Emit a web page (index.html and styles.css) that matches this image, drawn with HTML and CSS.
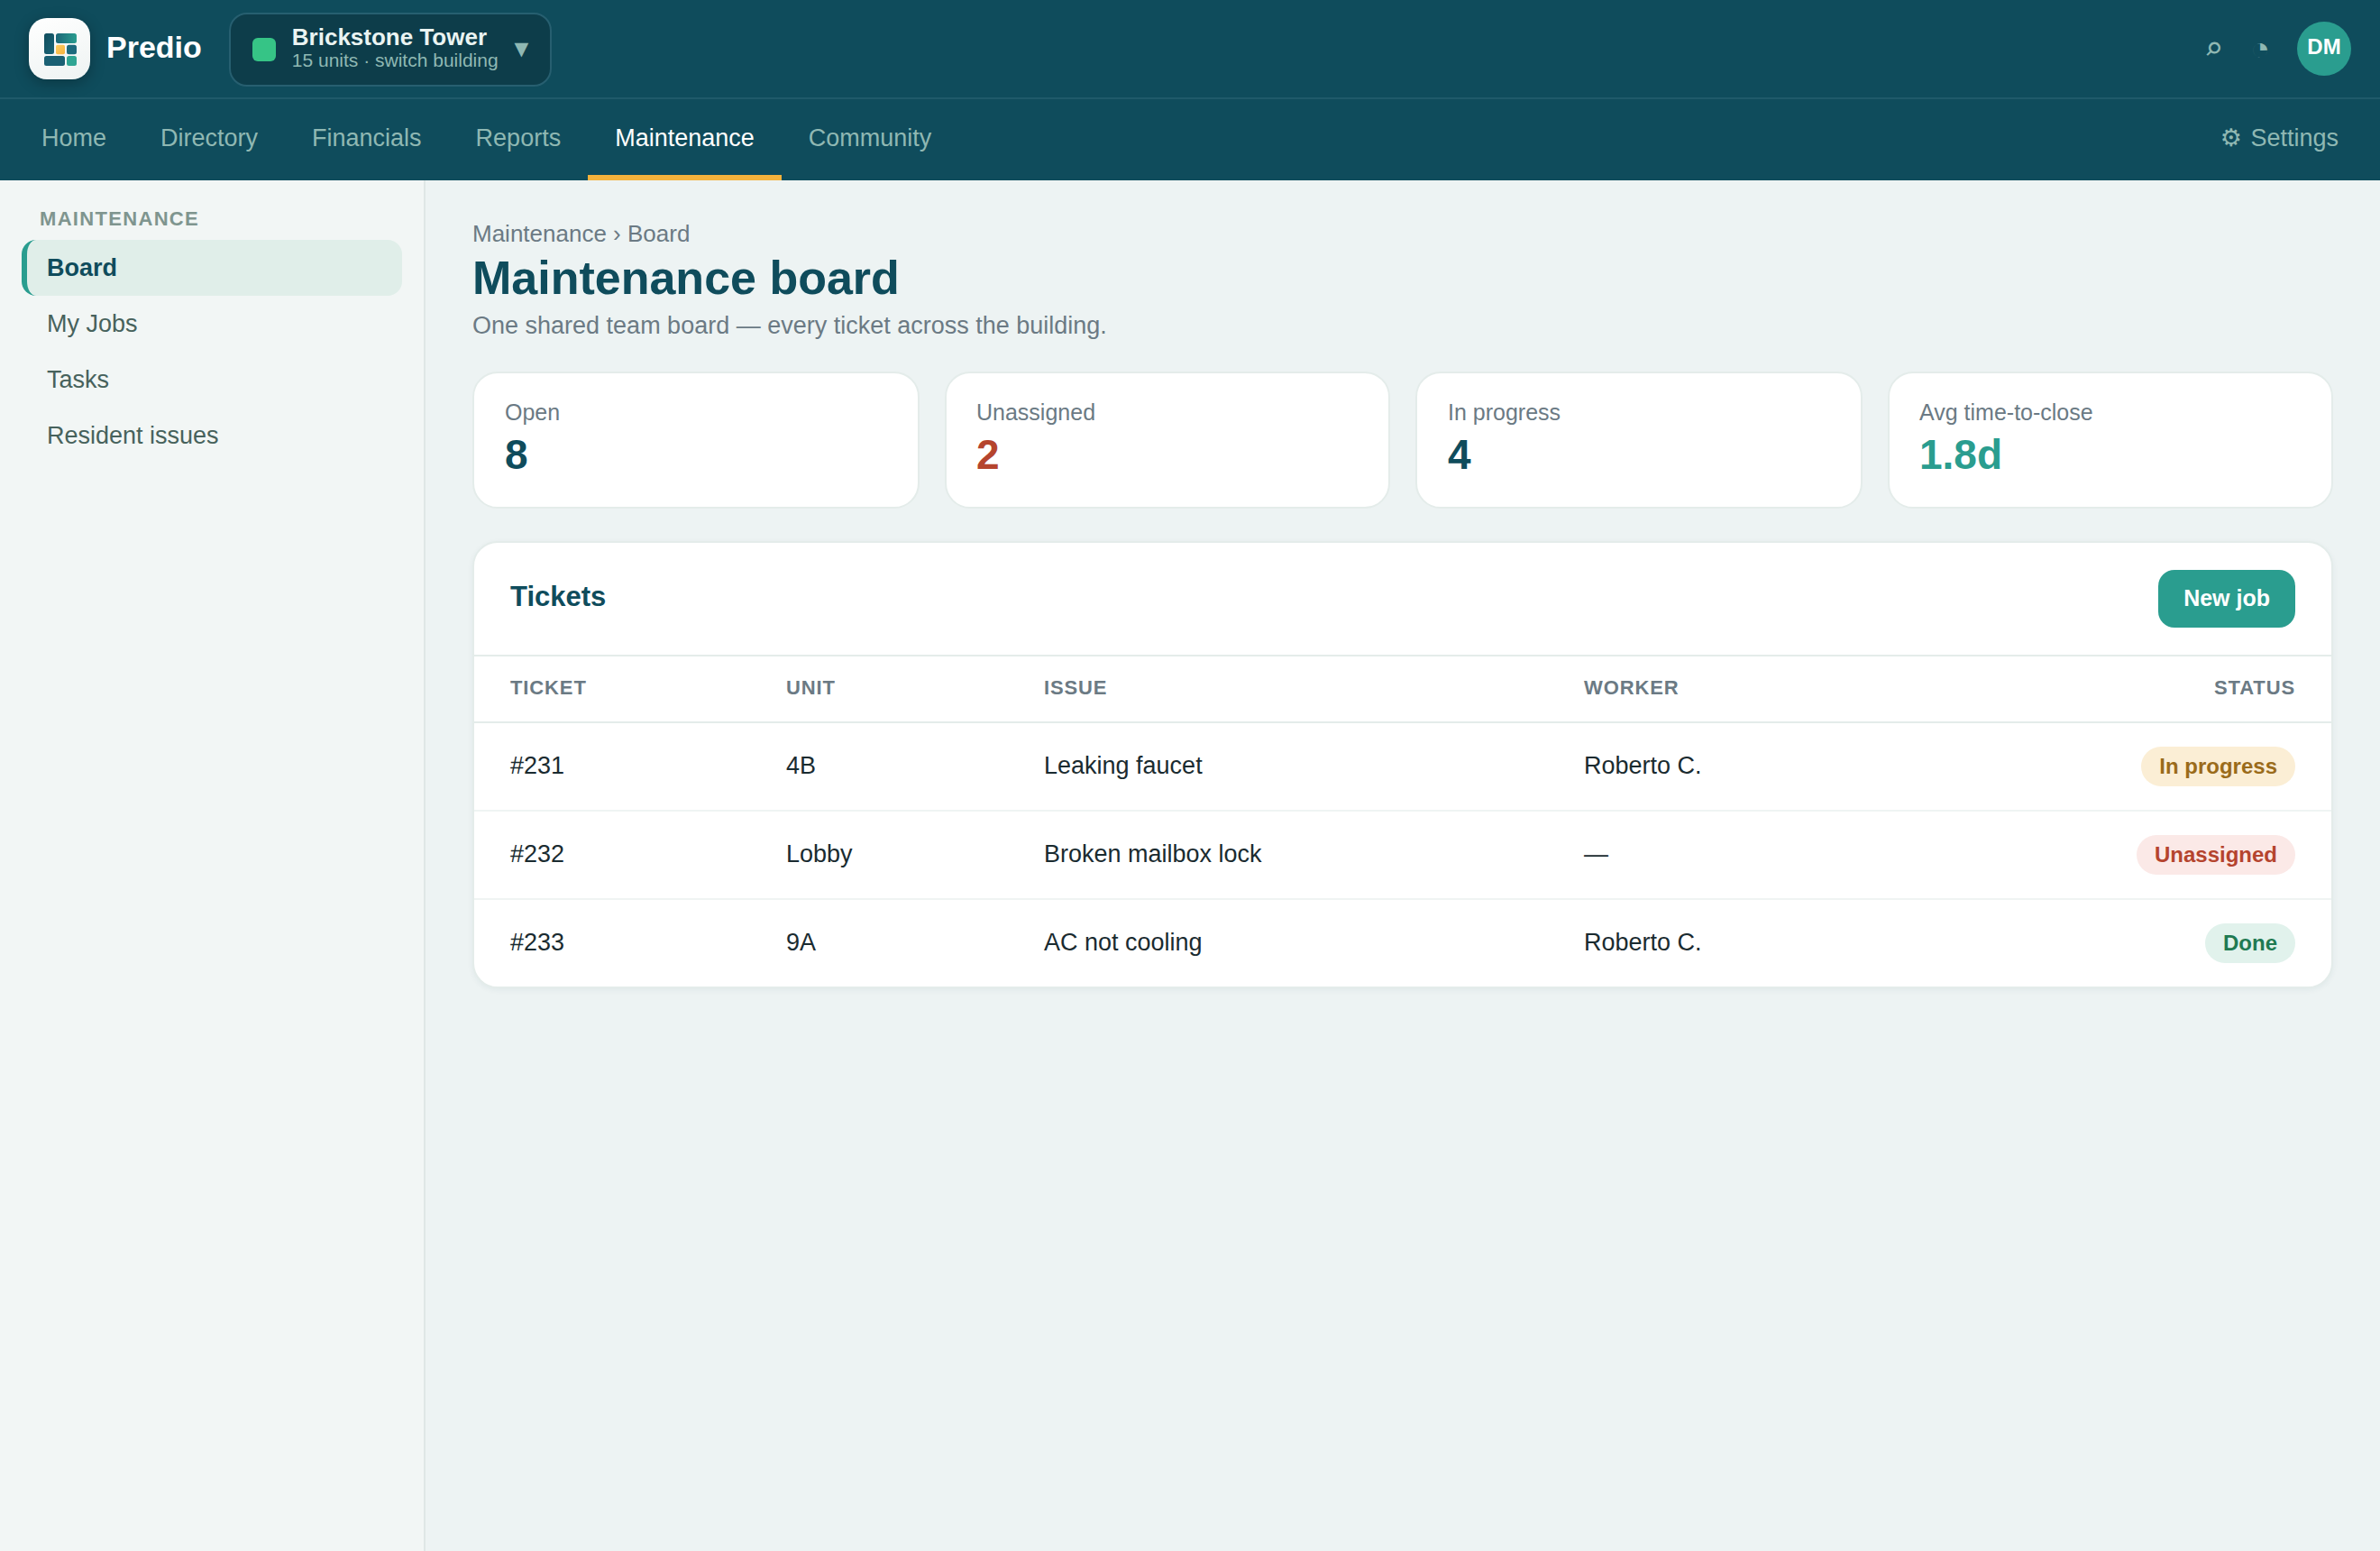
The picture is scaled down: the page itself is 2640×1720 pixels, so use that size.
FILE: index.html
```
<!DOCTYPE html>
<html lang="en">
<head>
    <meta charset="UTF-8">
    <meta name="viewport" content="width=device-width, initial-scale=1.0">
    <title>Maintenance board - Predio</title>
    <link rel="stylesheet" href="styles.css">
</head>
<body>
    <header class="topbar">
        <div class="logo">
            <svg width="36" height="36" viewBox="0 0 36 36">
                <defs>
                    <linearGradient id="g-dark" x1="0" y1="0" x2="1" y2="1">
                        <stop offset="0" stop-color="#0f4c5c"/>
                        <stop offset="1" stop-color="#1b6678"/>
                    </linearGradient>
                    <linearGradient id="g-teal" x1="0" y1="0" x2="1" y2="0">
                        <stop offset="0" stop-color="#1b6678"/>
                        <stop offset="1" stop-color="#2a9d8f"/>
                    </linearGradient>
                    <linearGradient id="g-gold" x1="0" y1="0" x2="1" y2="1">
                        <stop offset="0" stop-color="#ffce62"/>
                        <stop offset="1" stop-color="#f5b23e"/>
                    </linearGradient>
                </defs>
                <rect x="0" y="0" width="11" height="23" rx="2.5" fill="url(#g-dark)"/>
                <rect x="13" y="0" width="23" height="11" rx="2.5" fill="url(#g-teal)"/>
                <rect x="13" y="12.8" width="10" height="10.4" rx="1.8" fill="url(#g-gold)"/>
                <rect x="25" y="12.8" width="11" height="10.4" rx="2.5" fill="#1d6a7d"/>
                <rect x="0" y="25" width="23" height="11" rx="2.5" fill="#1a6073"/>
                <rect x="25" y="25" width="11" height="11" rx="2.5" fill="#2fa593"/>
            </svg>
        </div>
        <span class="brand">Predio</span>

        <button class="building-switch">
            <span class="building-dot"></span>
            <span class="building-info">
                <strong>Brickstone Tower</strong>
                <small>15 units · switch building</small>
            </span>
            <span class="caret">▼</span>
        </button>

        <div class="topbar-actions">
            <span class="icon search">⌕</span>
            <span class="icon">◔</span>
            <span class="avatar">DM</span>
        </div>
    </header>

    <nav class="main-nav">
        <a href="#">Home</a>
        <a href="#">Directory</a>
        <a href="#">Financials</a>
        <a href="#">Reports</a>
        <a href="#" class="active">Maintenance</a>
        <a href="#">Community</a>
        <a href="#" class="settings"><span class="gear">⚙</span> Settings</a>
    </nav>

    <div class="layout">
        <aside class="sidebar">
            <h4>Maintenance</h4>
            <a href="#" class="active">Board</a>
            <a href="#">My Jobs</a>
            <a href="#">Tasks</a>
            <a href="#">Resident issues</a>
        </aside>

        <main class="content">
            <div class="breadcrumb">Maintenance › Board</div>
            <h1>Maintenance board</h1>
            <p class="subtitle">One shared team board — every ticket across the building.</p>

            <div class="stats">
                <div class="stat-card">
                    <div class="stat-label">Open</div>
                    <div class="stat-value">8</div>
                </div>
                <div class="stat-card">
                    <div class="stat-label">Unassigned</div>
                    <div class="stat-value red">2</div>
                </div>
                <div class="stat-card">
                    <div class="stat-label">In progress</div>
                    <div class="stat-value">4</div>
                </div>
                <div class="stat-card">
                    <div class="stat-label">Avg time-to-close</div>
                    <div class="stat-value teal">1.8d</div>
                </div>
            </div>

            <section class="panel">
                <div class="panel-header">
                    <h2>Tickets</h2>
                    <button class="btn">New job</button>
                </div>
                <table>
                    <thead>
                        <tr>
                            <th class="col-ticket">Ticket</th>
                            <th class="col-unit">Unit</th>
                            <th class="col-issue">Issue</th>
                            <th>Worker</th>
                            <th class="right">Status</th>
                        </tr>
                    </thead>
                    <tbody>
                        <tr>
                            <td>#231</td>
                            <td>4B</td>
                            <td>Leaking faucet</td>
                            <td>Roberto C.</td>
                            <td class="right"><span class="badge progress">In progress</span></td>
                        </tr>
                        <tr>
                            <td>#232</td>
                            <td>Lobby</td>
                            <td>Broken mailbox lock</td>
                            <td>—</td>
                            <td class="right"><span class="badge unassigned">Unassigned</span></td>
                        </tr>
                        <tr>
                            <td>#233</td>
                            <td>9A</td>
                            <td>AC not cooling</td>
                            <td>Roberto C.</td>
                            <td class="right"><span class="badge done">Done</span></td>
                        </tr>
                    </tbody>
                </table>
            </section>
        </main>
    </div>
</body>
</html>
```
FILE: styles.css
```
* {
    box-sizing: border-box;
}

body {
    margin: 0;
    min-height: 100vh;
    display: flex;
    flex-direction: column;
    font-family: "Liberation Sans", Arial, sans-serif;
    font-size: 27px;
    color: #1a2b30;
    background-color: #edf3f3;
}

a {
    text-decoration: none;
}

/* Top bar */
.topbar {
    display: flex;
    align-items: center;
    height: 110px;
    padding: 0 32px;
    background-color: #0f4c5c;
    border-bottom: 2px solid #1f5a6a;
}

.logo {
    display: flex;
    align-items: center;
    justify-content: center;
    width: 68px;
    height: 68px;
    padding: 2px 0 0 2px;
    border-radius: 20px;
    background: linear-gradient(160deg, #ffffff, #eef3f2);
    box-shadow: 0 4px 16px rgba(0, 0, 0, 0.28);
}

.brand {
    margin-left: 18px;
    color: #fff;
    font-size: 34px;
    font-weight: bold;
    line-height: 40px;
    margin-top: -4px;
}

.building-switch {
    display: flex;
    align-items: center;
    gap: 18px;
    height: 82px;
    margin-left: 30px;
    margin-top: 2px;
    padding: 0 24px;
    border: 2px solid #275f70;
    border-radius: 20px;
    background-color: #0d3d4a;
    font-family: inherit;
    text-align: left;
}

.building-dot {
    width: 26px;
    height: 26px;
    border-radius: 6px;
    background-color: #36c486;
}

.building-info {
    display: flex;
    flex-direction: column;
    margin-top: -4px;
}

.building-info strong {
    color: #eaf4f2;
    font-size: 26px;
    line-height: 28px;
}

.building-info small {
    color: #8fb8b3;
    font-size: 21px;
    line-height: 24px;
}

.caret {
    margin-top: -2px;
    color: #8fb8b3;
    font-family: "DejaVu Sans", sans-serif;
    font-size: 20.5px;
}

.topbar-actions {
    display: flex;
    align-items: center;
    gap: 30px;
    margin-left: auto;
}

.icon {
    color: #8fb8b3;
    font-size: 36px;
    line-height: 40px;
}

.icon.search {
    font-family: "DejaVu Sans Mono", monospace;
}

.avatar {
    display: flex;
    align-items: center;
    justify-content: center;
    width: 60px;
    height: 60px;
    padding-bottom: 5px;
    border-radius: 50%;
    background-color: #2a9d8f;
    color: #fff;
    font-size: 24px;
    line-height: 27px;
    font-weight: bold;
}

/* Main navigation */
.main-nav {
    display: flex;
    height: 90px;
    padding: 0 16px;
    background-color: #0f4c5c;
}

.main-nav a {
    padding: 28px 30px 0;
    color: #8fb8b3;
    line-height: 31px;
    border-bottom: 6px solid transparent;
}

.main-nav a.active {
    color: #fff;
    border-bottom-color: #f4b23c;
}

.main-nav .settings {
    margin-left: auto;
}

.gear {
    margin-right: 2px;
    font-family: "DejaVu Sans", sans-serif;
    line-height: 1;
}

/* Sidebar */
.layout {
    display: flex;
    flex: 1;
}

.sidebar {
    width: 472px;
    padding: 30px 24px;
    background-color: #f2f6f5;
    border-right: 2px solid #dfe7e6;
}

.sidebar h4 {
    margin: 0;
    padding: 0 20px 10px;
    color: #7f958f;
    font-size: 22px;
    line-height: 26px;
    letter-spacing: 0.06em;
    text-transform: uppercase;
}

.sidebar a {
    display: block;
    height: 62px;
    padding: 0 22px;
    border-left: 6px solid transparent;
    border-radius: 16px;
    color: #47625c;
    line-height: 62px;
}

.sidebar a.active {
    background-color: #e0eee9;
    border-left-color: #2a9d8f;
    color: #0f4c5c;
    font-weight: bold;
}

/* Content */
.content {
    flex: 1;
    padding: 44px 52px;
}

.breadcrumb {
    color: #6b7a84;
    font-size: 26px;
    line-height: 30px;
}

h1 {
    margin: 4px 0 8px;
    color: #0f4c5c;
    font-size: 52px;
    line-height: 60px;
}

.subtitle {
    margin: 0 0 35px;
    color: #6b7a84;
    line-height: 31px;
}

.stats {
    display: grid;
    grid-template-columns: 496fr 494fr 496fr 494fr;
    gap: 28px;
    margin-bottom: 36px;
}

.stat-card {
    height: 152px;
    padding: 29px 34px;
    background-color: #fff;
    border: 2px solid #e4ecea;
    border-radius: 28px;
}

.stat-card:nth-child(even) {
    padding-left: 33px;
}

.stat-label {
    color: #6b7a84;
    font-size: 25px;
    line-height: 29px;
}

.stat-value {
    margin-top: 6px;
    color: #0f4c5c;
    font-size: 46px;
    font-weight: bold;
    line-height: 52px;
}

.stat-value.red {
    color: #b5442e;
}

.stat-value.teal {
    color: #2a9d8f;
}

/* Tickets panel */
.panel {
    background-color: #fff;
    border: 2px solid #e4ecea;
    border-radius: 28px;
    box-shadow: 0 2px 6px rgba(15, 76, 92, 0.06);
}

.panel-header {
    display: flex;
    align-items: baseline;
    justify-content: space-between;
    padding: 30px 40px;
    border-bottom: 2px solid #e4ecea;
}

.panel-header h2 {
    margin: 0;
    color: #0f4c5c;
    font-size: 31px;
}

.btn {
    height: 64px;
    padding: 17px 28px 19px;
    border: none;
    border-radius: 18px;
    background-color: #2a9d8f;
    color: #fff;
    font-family: inherit;
    font-size: 25px;
    font-weight: bold;
    line-height: 28px;
}

table {
    width: 100%;
    table-layout: fixed;
    border-collapse: separate;
    border-spacing: 0;
}

th {
    height: 74px;
    padding: 0 40px 3px;
    color: #6b7a84;
    font-size: 22px;
    line-height: 25px;
    letter-spacing: 0.04em;
    text-align: left;
    text-transform: uppercase;
    border-bottom: 2px solid #e4ecea;
}

td {
    height: 98px;
    padding: 0 40px 2px;
    line-height: 30px;
    border-bottom: 2px solid #eff4f3;
}

td.right {
    padding-bottom: 0;
}

tr:last-child td {
    height: 96px;
    border-bottom: none;
}

.right {
    text-align: right;
}

.col-ticket {
    width: 306px;
}

.col-unit {
    width: 286px;
}

.col-issue {
    width: 599px;
}

.badge {
    display: inline-block;
    padding: 0 20px;
    border-radius: 22px;
    font-size: 24px;
    font-weight: bold;
    line-height: 44px;
}

.badge.progress {
    background-color: #fbeed5;
    color: #9a6b1a;
}

.badge.unassigned {
    background-color: #fbe9e7;
    color: #b5442e;
}

.badge.done {
    background-color: #e1f2ec;
    color: #1f7a52;
}
```
